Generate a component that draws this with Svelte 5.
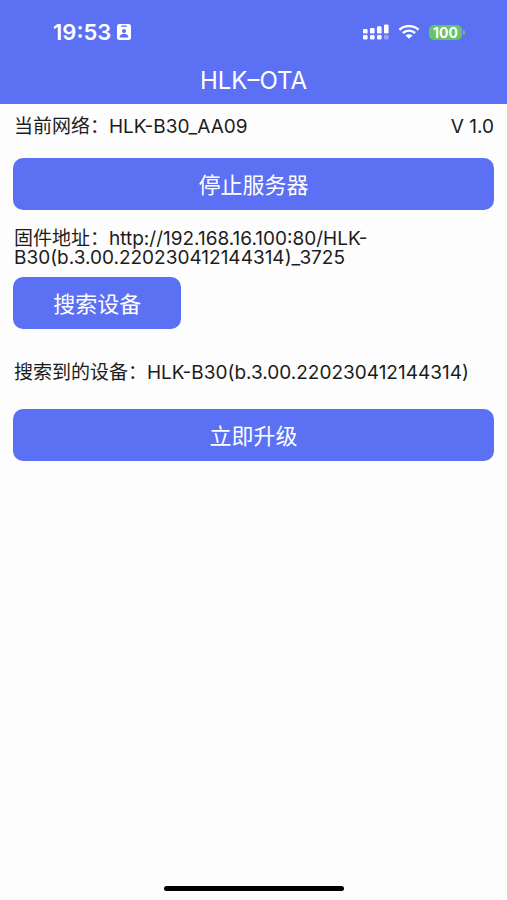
<script>
	let network = $state('HLK-B30_AA09');
	let version = $state('V 1.0');
	let firmwareUrl = $state('http://192.168.16.100:80/HLK-B30(b.3.00.220230412144314)_3725');
	let device = $state('HLK-B30(b.3.00.220230412144314)');
	let battery = $state(100);
</script>

<div class="screen">
	<header>
		<div class="status-bar">
			<div class="clock">
				<span>19:53</span>
				<svg width="14" height="16" viewBox="0 0 14 16" aria-hidden="true">
					<rect width="14" height="16" rx="2.5" fill="#fff" />
					<rect x="4" y="1.5" width="6" height="1.3" rx="0.6" fill="#5b70f3" />
					<circle cx="7" cy="7" r="2.1" fill="#5b70f3" />
					<path d="M2.6 13.4c.2-2.5 1.8-3.7 4.4-3.7s4.2 1.2 4.4 3.7z" fill="#5b70f3" />
				</svg>
			</div>
			<div class="indicators">
				<svg width="26" height="16" viewBox="0 0 26 16" fill="#fff" aria-hidden="true">
					<rect x="0" y="5" width="4.6" height="4.5" rx="1.2" />
					<rect x="7" y="4" width="4.6" height="5.5" rx="1.2" />
					<rect x="14" y="2.2" width="4.6" height="7.3" rx="1.2" />
					<rect x="21" y="0.5" width="4.6" height="9" rx="1.2" />
					<rect x="0" y="11" width="4.6" height="4.5" rx="1.2" />
					<rect x="7" y="11" width="4.6" height="4.5" rx="1.2" />
					<rect x="14" y="11" width="4.6" height="4.5" rx="1.2" />
					<rect x="21" y="11" width="4.6" height="4.5" rx="1.2" opacity="0.35" />
				</svg>
				<svg width="22" height="14" viewBox="0 0 22 14" aria-hidden="true">
					<path
						d="M1.4 4.7C6.8-.1 15.2-.1 20.6 4.7M4.9 8C8.5 5 13.5 5 17.1 8"
						fill="none"
						stroke="#fff"
						stroke-width="2.5"
					/>
					<path d="M7.4 10.5c2.1-1.7 5.1-1.7 7.2 0L11 13.8z" fill="#fff" />
				</svg>
				<div class="battery">
					<span class="level">{battery}</span>
					<span class="tip"></span>
				</div>
			</div>
		</div>
		<h1>HLK–OTA</h1>
	</header>

	<main>
		<div class="row">
			<p>当前网络：{network}</p>
			<p>{version}</p>
		</div>
		<button class="btn">停止服务器</button>
		<p class="firmware">固件地址：{firmwareUrl}</p>
		<button class="btn search">搜索设备</button>
		<p class="device">搜索到的设备：{device}</p>
		<button class="btn">立即升级</button>
	</main>

	<div class="home-indicator"></div>
</div>

<style>
	:global(body) {
		margin: 0;
		background: #fdfdfd;
	}

	.screen {
		display: flex;
		flex-direction: column;
		min-height: 100vh;
		font-family: Inter, 'Noto Sans CJK SC', sans-serif;
		font-size: 19px;
		line-height: 19px;
		color: #1c1c1c;
	}

	header {
		background: #5b70f3;
		color: #fff;
	}

	.status-bar {
		display: flex;
		align-items: center;
		justify-content: space-between;
		height: 64px;
		padding: 0 42px 0 53px;
	}

	.clock {
		display: flex;
		align-items: center;
		gap: 6px;
		font-size: 22px;
		font-weight: 600;
	}

	.indicators {
		display: flex;
		align-items: center;
		gap: 9px;
	}

	.battery {
		display: flex;
		align-items: center;
		gap: 1px;
	}

	.level {
		width: 33px;
		border-radius: 5px;
		background: #65c466;
		font-size: 14px;
		font-weight: 700;
		line-height: 15px;
		text-align: center;
	}

	.tip {
		width: 2px;
		height: 5px;
		border-radius: 0 2px 2px 0;
		background: #65c466;
	}

	h1 {
		margin: 0;
		padding: 5px 0 11px;
		font-size: 24px;
		font-weight: 400;
		line-height: 24px;
		text-align: center;
	}

	main {
		flex: 1;
		padding: 13px;
	}

	p {
		margin: 0;
		padding-left: 1px;
		overflow-wrap: anywhere;
	}

	.row {
		display: flex;
		justify-content: space-between;
		margin-bottom: 22px;
	}

	.btn {
		display: block;
		width: 100%;
		height: 52px;
		padding: 0 0 2px;
		border: none;
		border-radius: 10px;
		background: #5b70f3;
		color: #fff;
		font-family: inherit;
		font-size: 22px;
		cursor: pointer;
	}

	.search {
		width: 35%;
	}

	.firmware {
		margin: 19px 0 10px;
	}

	.device {
		margin: 34px 0 27px;
	}

	.home-indicator {
		width: 180px;
		height: 5px;
		margin: 0 auto 9px;
		border-radius: 3px;
		background: #000;
	}
</style>
